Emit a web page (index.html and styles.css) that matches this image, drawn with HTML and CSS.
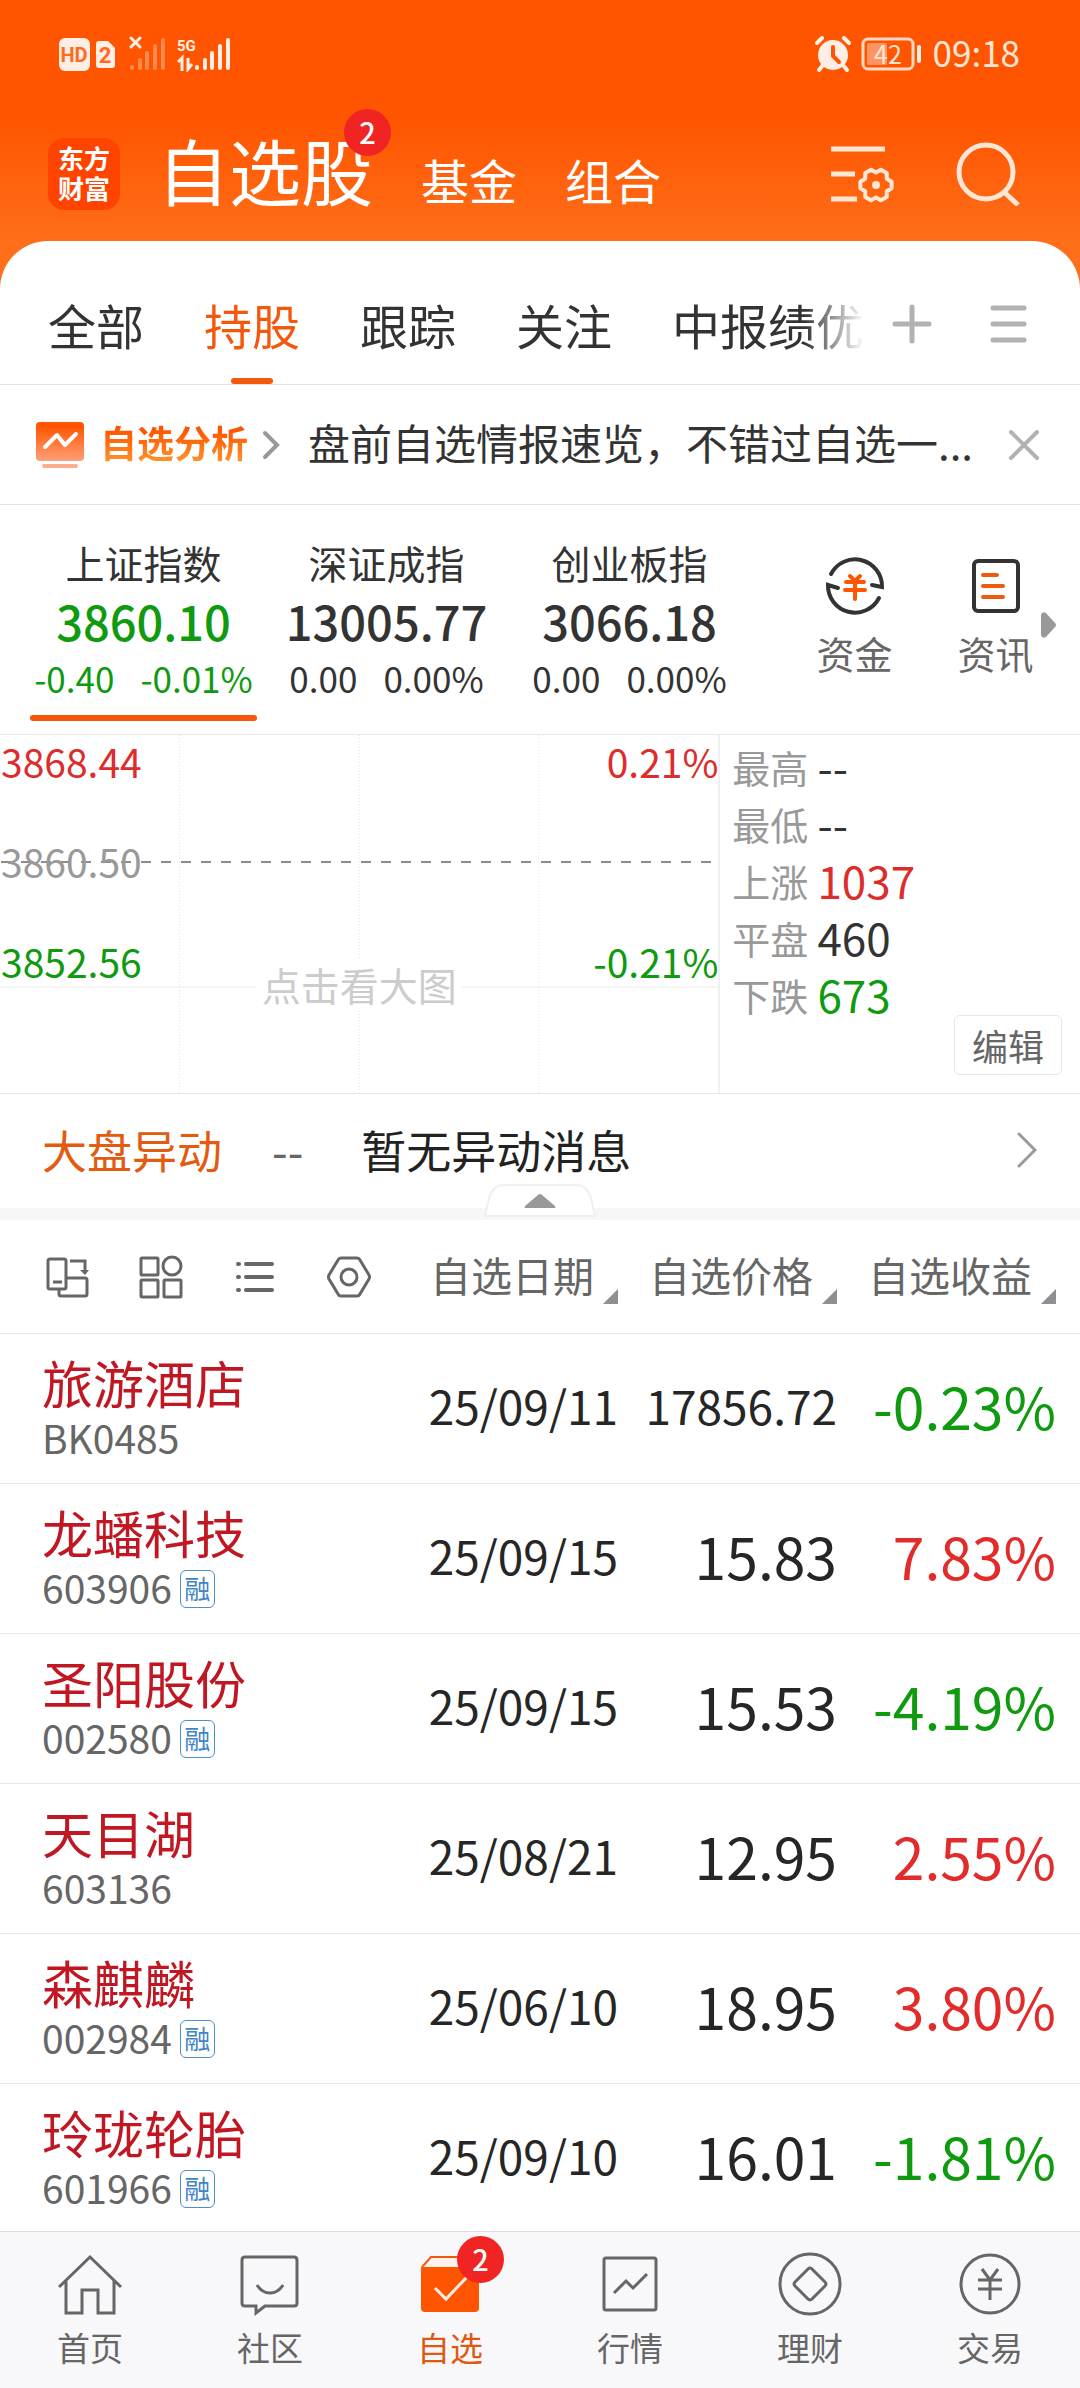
FILE: index.html
```html
<!DOCTYPE html>
<html lang="zh-CN">
<head>
    <meta charset="UTF-8">
    <meta name="viewport" content="width=device-width, initial-scale=1.0">
    <title>自选股</title>
    <link rel="stylesheet" href="styles.css">
</head>
<body>
<div class="app">
    <!-- Status bar -->
    <div class="status-bar">
        <svg class="status-left" width="174" height="36" viewBox="0 0 174 36">
            <rect x="1" y="2" width="31" height="33" rx="6" fill="#ffeee4"/>
            <text x="16" y="26" text-anchor="middle" class="hd-text">HD</text>
            <path d="M41 5h9l7 7v17a3 3 0 0 1-3 3H41a3 3 0 0 1-3-3V8a3 3 0 0 1 3-3z" fill="#ffeee4"/>
            <text x="47" y="27" text-anchor="middle" class="sim-text">2</text>
            <path d="M73 2l9 9M82 2l-9 9" stroke="#ffeee4" stroke-width="3" stroke-linecap="round"/>
            <path d="M74 31v1M82 24v8M89 17v15M97 10v22M105 4v28" stroke="#ff8a50" stroke-width="4" stroke-linecap="round"/>
            <text x="119" y="15" class="net-text">5G</text>
            <path d="M120 26l4-4v13M134 28l-4 5V22" stroke="#ffeee4" stroke-width="3" fill="none"/>
            <path d="M139 31v1M147 24v8M154 17v15M162 10v22M170 4v28" stroke="#ffeee4" stroke-width="4" stroke-linecap="round"/>
        </svg>
        <div class="status-right">
            <svg width="36" height="36" viewBox="0 0 36 36">
                <circle cx="18" cy="19" r="15" fill="#ffeee4"/>
                <path d="M2 7l5-5M34 7l-5-5M8 29l-4 5M28 29l4 5" stroke="#ffeee4" stroke-width="4" stroke-linecap="round"/>
                <path d="M18 11v9l6 6" stroke="#ff5500" stroke-width="4" fill="none" stroke-linecap="round"/>
            </svg>
            <svg width="62" height="36" viewBox="0 0 62 36">
                <rect x="2" y="3" width="50" height="30" rx="5" fill="none" stroke="#ffd9c4" stroke-width="3"/>
                <rect x="6" y="7" width="20" height="22" rx="2" fill="#ff9463"/>
                <path d="M58 11v14" stroke="#ffeee4" stroke-width="4" stroke-linecap="round"/>
                <text x="27" y="28" text-anchor="middle" class="battery-text">42</text>
            </svg>
            <span class="clock">09:18</span>
        </div>
    </div>

    <!-- Title bar -->
    <header class="title-bar">
        <div class="logo"><span>东方</span><span>财富</span></div>
        <nav class="sections">
            <a href="#" class="section current">自选股<span class="badge">2</span></a>
            <a href="#" class="section">基金</a>
            <a href="#" class="section">组合</a>
        </nav>
        <button class="icon-btn" aria-label="设置">
            <svg width="64" height="64" viewBox="0 0 64 64" fill="none" stroke="#ffe6d5" stroke-width="5">
                <path d="M1 7h54M1 32h24M1 57h26"/>
                <path d="M61.6 39.7V46.3L56.8 49.3L56.7 54.9L50.9 58.2L46 55.5L41.1 58.2L35.3 54.9L35.2 49.3L30.4 46.3V39.7L35.2 36.7L35.3 31.1L41.1 27.8L46 30.5L50.9 27.8L56.7 31.1L56.8 36.7z" stroke-width="4" stroke-linejoin="round"/>
                <circle cx="46" cy="43" r="4" fill="#ffe6d5" stroke="none"/>
            </svg>
        </button>
        <button class="icon-btn" aria-label="搜索">
            <svg width="64" height="64" viewBox="0 0 64 64" fill="none" stroke="#ffe6d5" stroke-width="5">
                <circle cx="30" cy="30" r="27"/>
                <path d="M48 50l14 13"/>
            </svg>
        </button>
    </header>

    <main class="panel">
        <!-- Group tabs -->
        <div class="tabs">
            <div class="tab-list">
                <button class="tab">全部</button>
                <button class="tab active">持股</button>
                <button class="tab">跟踪</button>
                <button class="tab">关注</button>
                <button class="tab">中报绩优</button>
            </div>
            <button class="tab-btn" aria-label="添加">
                <svg width="40" height="40" viewBox="0 0 40 40" stroke="#b2b2b2" stroke-width="5" stroke-linecap="round"><path d="M3 20h34M20 3v34"/></svg>
            </button>
            <button class="tab-btn" aria-label="菜单">
                <svg width="40" height="40" viewBox="0 0 40 40" stroke="#b2b2b2" stroke-width="5" stroke-linecap="round"><path d="M5 4h31M5 20h31M5 36h31"/></svg>
            </button>
        </div>

        <!-- Analysis banner -->
        <div class="analysis">
            <svg width="50" height="50" viewBox="0 0 50 50">
                <defs>
                    <linearGradient id="fire" x1="0" y1="0" x2="0" y2="1">
                        <stop offset="0.1" stop-color="#ff5500"/>
                        <stop offset="1" stop-color="#ff9f78"/>
                    </linearGradient>
                </defs>
                <rect x="1" y="2" width="48" height="39" rx="4" fill="url(#fire)"/>
                <path d="M10 27l12-12 8 10 11-11" fill="none" stroke="#fff" stroke-width="4" stroke-linecap="round" stroke-linejoin="round"/>
                <path d="M9 46h32" stroke="#ffad8c" stroke-width="4" stroke-linecap="round"/>
            </svg>
            <a href="#" class="analysis-title">自选分析</a>
            <svg class="analysis-arrow" width="18" height="30" viewBox="0 0 18 30" fill="none" stroke="#999" stroke-width="4" stroke-linecap="round"><path d="M3 3l12 12L3 27"/></svg>
            <a href="#" class="analysis-news">盘前自选情报速览，不错过自选一...</a>
            <button class="close" aria-label="关闭">
                <svg width="32" height="32" viewBox="0 0 32 32" stroke="#b2b2b2" stroke-width="4" stroke-linecap="round"><path d="M3 3l26 26M29 3L3 29"/></svg>
            </button>
        </div>

        <!-- Indices -->
        <div class="market">
            <div class="indices">
                <button class="index selected down">
                    <span class="index-name">上证指数</span>
                    <span class="index-value">3860.10</span>
                    <span class="index-change"><span>-0.40</span><span>-0.01%</span></span>
                </button>
                <button class="index">
                    <span class="index-name">深证成指</span>
                    <span class="index-value">13005.77</span>
                    <span class="index-change"><span>0.00</span><span>0.00%</span></span>
                </button>
                <button class="index">
                    <span class="index-name">创业板指</span>
                    <span class="index-value">3066.18</span>
                    <span class="index-change"><span>0.00</span><span>0.00%</span></span>
                </button>
            </div>
            <div class="shortcuts">
                <a href="#" class="shortcut">
                    <svg width="62" height="62" viewBox="0 0 62 62" fill="none" stroke="#333" stroke-width="4" stroke-linecap="round">
                        <path d="M7 19A27 27 0 0 1 58 32l-10-2"/>
                        <path d="M55 43A27 27 0 0 1 4 30l10 3"/>
                        <path d="M26 21l5 5 5-5M22 27h18M21 35h20M31 27v17" stroke="#ff5500"/>
                    </svg>
                    资金
                </a>
                <a href="#" class="shortcut">
                    <svg width="62" height="62" viewBox="0 0 62 62" fill="none" stroke="#333" stroke-width="4" stroke-linecap="round">
                        <rect x="9" y="6" width="44" height="50" rx="4"/>
                        <path d="M18 20h14M18 31h20M18 42h20" stroke="#ee5a10"/>
                    </svg>
                    资讯
                </a>
            </div>
            <svg class="more-arrow" width="15" height="26" viewBox="0 0 15 26"><path d="M0 3q1-4 5-2l9 10q2 2 0 4l-9 10q-4 2-5-2z" fill="#999"/></svg>
        </div>

        <!-- Intraday chart and market breadth -->
        <div class="overview">
            <div class="chart">
                <svg class="chart-grid" width="100%" height="100%">
                    <g stroke="#e2e2e2" stroke-dasharray="1 2">
                        <line x1="25%" y1="0" x2="25%" y2="100%"/>
                        <line x1="50%" y1="0" x2="50%" y2="100%"/>
                        <line x1="75%" y1="0" x2="75%" y2="100%"/>
                    </g>
                    <line x1="0" y1="252" x2="100%" y2="252" stroke="#ececec" stroke-width="1"/>
                    <line x1="1" y1="127" x2="99%" y2="127" stroke="#8c8c8c" stroke-width="2" stroke-dasharray="10 10"/>
                </svg>
                <div class="chart-row up"><span>3868.44</span><span>0.21%</span></div>
                <div class="chart-row flat"><span>3860.50</span></div>
                <div class="chart-row down"><span>3852.56</span><span>-0.21%</span></div>
                <span class="chart-hint">点击看大图</span>
            </div>
            <div class="breadth">
                <dl>
                    <div><dt>最高</dt><dd>--</dd></div>
                    <div><dt>最低</dt><dd>--</dd></div>
                    <div><dt>上涨</dt><dd class="up">1037</dd></div>
                    <div><dt>平盘</dt><dd>460</dd></div>
                    <div><dt>下跌</dt><dd class="down">673</dd></div>
                </dl>
                <button class="edit">编辑</button>
            </div>
        </div>

        <!-- Market moves -->
        <div class="moves">
            <span class="moves-title">大盘异动</span>
            <span class="moves-time">--</span>
            <a href="#" class="moves-text">暂无异动消息</a>
            <svg width="20" height="36" viewBox="0 0 20 36" fill="none" stroke="#999" stroke-width="3" stroke-linecap="round"><path d="M2 2l16 16L2 34"/></svg>
            <button class="handle" aria-label="收起">
                <svg width="112" height="34" viewBox="0 0 112 34">
                    <path d="M1 32L5 14Q9 1 20 1H92q11 0 15 13l4 18z" fill="#fff" stroke="#f0f0f0" stroke-width="2"/>
                    <path d="M41 22L54 11q2-2 4 0l13 11q1 2-1 2H42q-2 0-1-2z" fill="#999"/>
                </svg>
            </button>
        </div>

        <!-- Stock list -->
        <div class="list">
            <table class="stocks">
                <thead>
                    <tr>
                        <th class="col-name">
                            <div class="tools">
                                <button aria-label="横屏">
                                    <svg width="44" height="44" viewBox="0 0 44 44" fill="none" stroke="#666" stroke-width="3">
                                        <rect x="3" y="4" width="18" height="30" rx="2"/>
                                        <path d="M8 27h9M14 34v5q0 2 2 2h24q2 0 2-2V25q0-2-2-2H21M25 6h15v11"/>
                                        <path d="M35 15h9l-4 5z" fill="#666" stroke="none"/>
                                    </svg>
                                </button>
                                <button aria-label="宫格">
                                    <svg width="44" height="44" viewBox="0 0 44 44" fill="none" stroke="#666" stroke-width="3">
                                        <rect x="2" y="3" width="17" height="17" rx="1"/>
                                        <circle cx="33" cy="11" r="9"/>
                                        <rect x="2" y="25" width="17" height="17" rx="1"/>
                                        <rect x="25" y="25" width="17" height="17" rx="1"/>
                                    </svg>
                                </button>
                                <button aria-label="列表">
                                    <svg width="44" height="44" viewBox="0 0 44 44" stroke="#666" stroke-width="4" stroke-linecap="round">
                                        <path d="M13 9h26M13 22h26M13 35h26M5 9h1M5 22h1M5 35h1"/>
                                    </svg>
                                </button>
                                <button aria-label="设置">
                                    <svg width="44" height="44" viewBox="0 0 44 44" fill="none" stroke="#666" stroke-width="3">
                                        <path d="M14 3h16q2 0 3 2l9 15q1 2 0 4l-9 15q-1 2-3 2H14q-2 0-3-2L2 24q-1-2 0-4L11 5q1-2 3-2z"/>
                                        <circle cx="22" cy="22" r="8"/>
                                    </svg>
                                </button>
                            </div>
                        </th>
                        <th><button class="sort">自选日期</button></th>
                        <th><button class="sort">自选价格</button></th>
                        <th class="col-gain"><button class="sort">自选收益</button></th>
                    </tr>
                </thead>
                <tbody>
                    <tr>
                        <td class="stock"><a href="#">旅游酒店</a><div class="code">BK0485</div></td>
                        <td class="long">25/09/11</td>
                        <td class="long">17856.72</td>
                        <td class="gain down">-0.23%</td>
                    </tr>
                    <tr>
                        <td class="stock"><a href="#">龙蟠科技</a><div class="code">603906<span class="margin-tag">融</span></div></td>
                        <td class="long">25/09/15</td>
                        <td>15.83</td>
                        <td class="gain up">7.83%</td>
                    </tr>
                    <tr>
                        <td class="stock"><a href="#">圣阳股份</a><div class="code">002580<span class="margin-tag">融</span></div></td>
                        <td class="long">25/09/15</td>
                        <td>15.53</td>
                        <td class="gain down">-4.19%</td>
                    </tr>
                    <tr>
                        <td class="stock"><a href="#">天目湖</a><div class="code">603136</div></td>
                        <td class="long">25/08/21</td>
                        <td>12.95</td>
                        <td class="gain up">2.55%</td>
                    </tr>
                    <tr>
                        <td class="stock"><a href="#">森麒麟</a><div class="code">002984<span class="margin-tag">融</span></div></td>
                        <td class="long">25/06/10</td>
                        <td>18.95</td>
                        <td class="gain up">3.80%</td>
                    </tr>
                    <tr>
                        <td class="stock"><a href="#">玲珑轮胎</a><div class="code">601966<span class="margin-tag">融</span></div></td>
                        <td class="long">25/09/10</td>
                        <td>16.01</td>
                        <td class="gain down">-1.81%</td>
                    </tr>
                </tbody>
            </table>
        </div>
    </main>

    <!-- Bottom navigation -->
    <nav class="bottom-nav">
        <a href="#">
            <svg width="66" height="66" viewBox="0 0 66 66" fill="none" stroke="#666" stroke-width="3">
                <path d="M2 35L33 5l31 30M9 29v32h16V38h16v23h16V29"/>
            </svg>
            首页
        </a>
        <a href="#">
            <svg width="66" height="66" viewBox="0 0 66 66" fill="none" stroke="#666" stroke-width="3">
                <path d="M8 5h49q3 0 3 3v43q0 3-3 3H28l-9 7v-7H8q-3 0-3-3V8q0-3 3-3z"/>
                <path d="M20 33q5 8 13 8t13-8"/>
            </svg>
            社区
        </a>
        <a href="#" class="current">
            <svg width="66" height="66" viewBox="0 0 66 66" fill="none">
                <path d="M5 15l9-10h38l9 10" stroke="#ee5a10" stroke-width="2" fill="#fff3ec"/>
                <path d="M4 15h58v41q0 4-4 4H8q-4 0-4-4z" fill="#ff5500"/>
                <path d="M18 36l11 11 21-22" stroke="#ffeee4" stroke-width="3"/>
            </svg>
            自选
            <span class="badge">2</span>
        </a>
        <a href="#">
            <svg width="66" height="66" viewBox="0 0 66 66" fill="none" stroke="#666" stroke-width="3">
                <rect x="7" y="6" width="52" height="52" rx="2"/>
                <path d="M17 41l12-12 7 7 14-14"/>
            </svg>
            行情
        </a>
        <a href="#">
            <svg width="66" height="66" viewBox="0 0 66 66" fill="none" stroke="#666" stroke-width="3">
                <circle cx="33" cy="32" r="30"/>
                <path d="M31 17q2-2 4 0l13 13q2 2 0 4L35 47q-2 2-4 0L18 34q-2-2 0-4z"/>
            </svg>
            理财
        </a>
        <a href="#">
            <svg width="66" height="66" viewBox="0 0 66 66" fill="none" stroke="#666" stroke-width="3">
                <circle cx="33" cy="32" r="29"/>
                <path d="M25 17l8 11 8-11M21 28h24M21 37h24M33 28v20"/>
            </svg>
            交易
        </a>
    </nav>
</div>
</body>
</html>
```

FILE: styles.css
```css
* {
    box-sizing: border-box;
}

body {
    margin: 0;
    font-family: "Noto Sans CJK SC", sans-serif;
    color: #333;
    background: #fff;
}

a {
    color: inherit;
    text-decoration: none;
}

button {
    margin: 0;
    padding: 0;
    border: 0;
    background: none;
    font: inherit;
    color: inherit;
}

svg {
    display: block;
    flex-shrink: 0;
}

.up {
    color: #dd2c2c;
}
.down {
    color: #0f9a0f;
}

.app {
    display: flex;
    flex-direction: column;
    height: 100vh;
    background: linear-gradient(#ff5500 120px, #ff6f1a 245px);
}

/* Status bar */
.status-bar {
    display: flex;
    align-items: center;
    justify-content: space-between;
    height: 108px;
    padding: 0 60px 0 58px;
}
.status-right {
    display: flex;
    align-items: center;
    gap: 10px;
}
.clock {
    font-size: 35px;
    line-height: 50px;
    color: #ffe6d5;
    padding-bottom: 4px;
}
.hd-text {
    font: bold 20px Roboto, sans-serif;
    fill: #ff6a20;
}
.sim-text {
    font: bold 22px Roboto, sans-serif;
    fill: #ff6a20;
}
.net-text {
    font: bold 15px Roboto, sans-serif;
    fill: #ffeee4;
}
.battery-text {
    font: 25px "Noto Sans CJK SC", sans-serif;
    fill: #ffe6d5;
}

/* Title bar */
.title-bar {
    display: flex;
    align-items: center;
    height: 133px;
    padding: 0 60px 2px 48px;
}
.logo {
    display: flex;
    flex-direction: column;
    justify-content: center;
    width: 72px;
    height: 72px;
    border-radius: 16px;
    background: #ff4400;
    color: #fff;
    font-size: 26px;
    font-weight: bold;
    line-height: 30px;
    padding-bottom: 2px;
    text-align: center;
}
.sections {
    display: flex;
    align-items: baseline;
    flex: 1;
    gap: 48px;
    margin-left: 37px;
    color: #fff;
}
.section {
    font-size: 48px;
    line-height: 96px;
}
.section.current {
    position: relative;
    font-size: 72px;
}
.badge {
    position: absolute;
    width: 47px;
    height: 47px;
    border-radius: 50%;
    background: #f12424;
    color: #fff;
    font-size: 29px;
    font-weight: 500;
    line-height: 44px;
    text-align: center;
}
.section .badge {
    top: -12px;
    right: -18px;
}
.icon-btn {
    margin-left: 62px;
}

/* White panel */
.panel {
    display: flex;
    flex-direction: column;
    flex: 1;
    min-height: 0;
    border-radius: 48px 48px 0 0;
    background: #fff;
    overflow: hidden;
}

/* Group tabs */
.tabs {
    display: flex;
    height: 144px;
    padding: 48px 52px 0 48px;
    border-bottom: 1px solid #e2e2e2;
}
.tab-list {
    display: flex;
    gap: 60px;
    flex: 1;
    overflow: hidden;
    white-space: nowrap;
    -webkit-mask-image: linear-gradient(to left, transparent, #000 60px);
    mask-image: linear-gradient(to left, transparent, #000 60px);
}
.tab {
    position: relative;
    flex-shrink: 0;
    font-size: 48px;
    line-height: 70px;
    padding-bottom: 25px;
}
.tab.active {
    color: #f4580c;
}
.tab.active::after {
    content: "";
    position: absolute;
    left: 27px;
    bottom: 0;
    width: 42px;
    height: 6px;
    border-radius: 3px;
    background: #f4580c;
}
.tab-btn {
    height: 70px;
    margin-left: 28px;
}
.tab-btn + .tab-btn {
    margin-left: 56px;
}

/* Analysis banner */
.analysis {
    display: flex;
    align-items: center;
    height: 120px;
    padding: 0 40px 0 35px;
    border-bottom: 1px solid #e2e2e2;
}
.analysis-title {
    margin-left: 15px;
    font-size: 37px;
    font-weight: bold;
    line-height: 54px;
    padding-bottom: 6px;
    background: linear-gradient(#ff5500 25%, #ff9a30 85%);
    -webkit-background-clip: text;
    background-clip: text;
    color: transparent;
}
.analysis-arrow {
    margin-left: 14px;
}
.analysis-news {
    flex: 1;
    margin-left: 28px;
    font-size: 42px;
    line-height: 60px;
    padding-bottom: 6px;
    white-space: nowrap;
}

/* Indices */
.market {
    position: relative;
    display: flex;
    height: 230px;
    padding-left: 22px;
    border-bottom: 1px solid #e8e8e8;
}
.indices {
    display: grid;
    grid-template-columns: repeat(3, 1fr);
    flex: 1;
}
.index {
    display: flex;
    flex-direction: column;
    align-items: center;
    margin: 0 8px;
    padding-top: 32px;
}
.index-name {
    color: #333;
    font-size: 39px;
    line-height: 50px;
}
.index-value {
    font-size: 47px;
    font-weight: 500;
    line-height: 68px;
}
.index-change {
    display: flex;
    gap: 26px;
    font-size: 35px;
    line-height: 46px;
}
.index.selected::after {
    content: "";
    width: 100%;
    height: 6px;
    margin-top: 14px;
    border-radius: 3px;
    background: #f4580c;
}
.shortcuts {
    display: flex;
    padding: 50px 14px 0 33px;
}
.shortcut {
    display: flex;
    flex-direction: column;
    align-items: center;
    gap: 11px;
    width: 141px;
    color: #666;
    font-size: 38px;
    line-height: 50px;
}
.more-arrow {
    position: absolute;
    right: 24px;
    top: 107px;
}

/* Intraday chart */
.overview {
    display: flex;
    height: 359px;
    border-bottom: 1px solid #e8e8e8;
}
.chart {
    position: relative;
    display: flex;
    flex-direction: column;
    gap: 50px;
    width: 66.7%;
    padding-top: 1px;
    border-right: 2px solid #f0f0f0;
}
.chart-grid {
    position: absolute;
    inset: 0;
}
.chart-row {
    position: relative;
    display: flex;
    justify-content: space-between;
    padding: 0 0 0 1px;
    font-size: 39px;
    line-height: 50px;
}
.flat {
    color: #999;
}
.chart-hint {
    position: absolute;
    top: 224px;
    left: 50%;
    transform: translateX(-50%);
    padding: 0 5px;
    background: #fff;
    color: #ccc;
    font-size: 39px;
    line-height: 50px;
    white-space: nowrap;
}

/* Market breadth */
.breadth {
    position: relative;
    flex: 1;
    padding-left: 12px;
}
.breadth dl {
    margin: 3px 0 0;
}
.breadth dl div {
    display: flex;
    align-items: center;
    gap: 9px;
    line-height: 57px;
}
.breadth dt {
    color: #999;
    font-size: 38px;
}
.breadth dd {
    margin: 0;
    font-size: 44px;
}
.edit {
    position: absolute;
    right: 18px;
    bottom: 18px;
    width: 108px;
    height: 60px;
    border: 1px solid #e6e6e6;
    border-radius: 6px;
    background: #fff;
    color: #666;
    font-size: 36px;
    line-height: 54px;
}

/* Market moves */
.moves {
    position: relative;
    display: flex;
    align-items: center;
    height: 126px;
    padding: 0 43px 2px 42px;
    border-bottom: 12px solid #f6f7f9;
    font-size: 45px;
    line-height: 60px;
}
.moves-title {
    color: #e35a10;
}
.moves-time {
    margin-left: 50px;
    color: #666;
}
.moves-text {
    flex: 1;
    margin-left: 58px;
    color: #222;
}
.handle {
    position: absolute;
    left: 50%;
    bottom: -10px;
    transform: translateX(-50%);
}

/* Stock list */
.list {
    flex: 1;
    min-height: 0;
    overflow: hidden;
}
.stocks {
    width: 100%;
    table-layout: fixed;
    border-collapse: separate;
    border-spacing: 0;
}
.stocks th {
    width: 219px;
    height: 114px;
    padding: 0 0 6px;
    border-bottom: 1px solid #e8e8e8;
    font-weight: normal;
    text-align: right;
}
.stocks .col-name {
    width: auto;
    padding: 0 0 0 45px;
}
.stocks .col-gain {
    width: 243px;
    padding-right: 24px;
}
.tools {
    display: flex;
    gap: 50px;
}
.sort {
    display: inline-flex;
    gap: 9px;
    color: #666;
    font-size: 41px;
    line-height: 60px;
    white-space: nowrap;
}
.sort::after {
    content: "";
    align-self: flex-end;
    border-left: 15px solid transparent;
    border-bottom: 15px solid #8e8e93;
}
.stocks td {
    height: 150px;
    padding: 0 0 8px;
    border-bottom: 1px solid #e8e8e8;
    color: #262626;
    font-size: 57px;
    text-align: right;
    white-space: nowrap;
}
.stocks .long {
    font-size: 46px;
}
.stocks .gain {
    padding-right: 24px;
}
.stocks .up {
    color: #e22c2c;
}
.stocks .down {
    color: #0f9a0f;
}
.stocks .stock {
    padding: 18px 0 0 42px;
    color: #c01722;
    font-size: 51px;
    line-height: 60px;
    text-align: left;
    vertical-align: top;
}
.code {
    display: flex;
    align-items: center;
    gap: 8px;
    color: #666;
    font-size: 39px;
    line-height: 50px;
}
.margin-tag {
    width: 35px;
    height: 38px;
    margin-top: 4px;
    border: 1px solid #4f8fc9;
    border-radius: 6px;
    color: #3f86c8;
    font-size: 26px;
    line-height: 34px;
    text-align: center;
}

/* Bottom navigation */
.bottom-nav {
    display: flex;
    height: 157px;
    padding-top: 20px;
    border-top: 1px solid #dfdfdf;
    background: #f8f8fa;
}
.bottom-nav a {
    position: relative;
    display: flex;
    flex-direction: column;
    align-items: center;
    flex: 1;
    gap: 8px;
    color: #666;
    font-size: 33px;
    line-height: 42px;
}
.bottom-nav .current {
    color: #dc5a14;
}
.bottom-nav .badge {
    top: -16px;
    left: 50%;
    margin-left: 7px;
}
```
